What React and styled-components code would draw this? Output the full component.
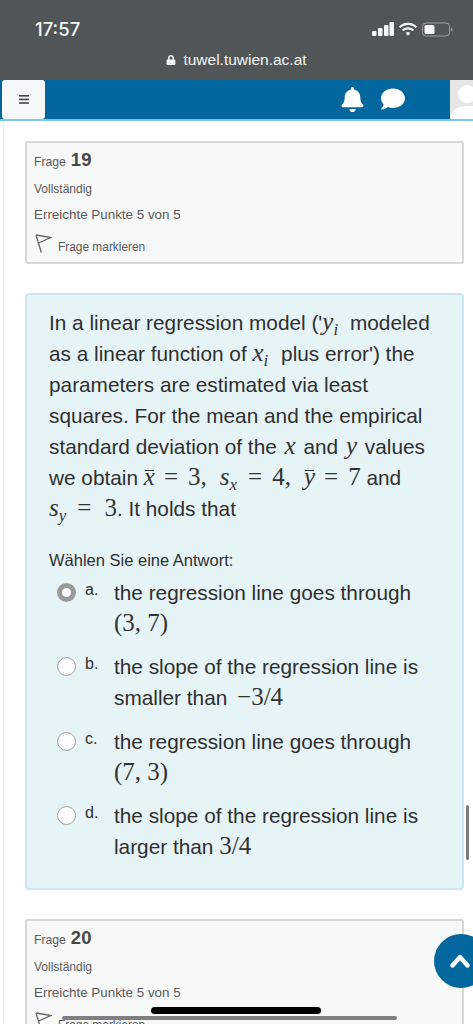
import styled, { createGlobalStyle } from 'styled-components';
import { FaBell, FaComment, FaLock, FaWifi } from 'react-icons/fa';

const GlobalStyle = createGlobalStyle`
  html, body { margin: 0; padding: 0; background: #fff; }
  body { font-family: "Liberation Sans", Arial, sans-serif; }
`;

const Page = styled.div`
  position: relative;
  width: 473px;
  height: 1024px;
  overflow: hidden;
  background: #fff;
`;

// Browser chrome
const Chrome = styled.div`
  height: 80px;
  background: #505557;
  color: #f4f5f5;
  display: flex;
  flex-direction: column;
`;

const StatusRow = styled.div`
  height: 50px;
  padding: 8px 20px 0 35px;
  box-sizing: border-box;
  display: flex;
  align-items: center;
  justify-content: space-between;
`;

const Clock = styled.span`
  font-size: 18.5px;
  font-weight: 500;
  font-family: Inter, "Liberation Sans", sans-serif;
`;

const StatusIcons = styled.div`
  display: flex;
  align-items: center;
  gap: 5px;
`;

const UrlRow = styled.div`
  display: flex;
  justify-content: center;
  align-items: center;
  gap: 7px;
  font-size: 15.5px;
  margin-top: 1px;
`;

// Site navbar
const Navbar = styled.div`
  height: 41px;
  box-sizing: border-box;
  background: #03679f;
  border-bottom: 2px solid #7cc8ea;
  display: flex;
  align-items: flex-start;
`;

const MenuButton = styled.div`
  width: 43px;
  height: 39px;
  margin-left: 2px;
  background: #f7f8f9;
  border-radius: 3px;
  display: flex;
  align-items: center;
  justify-content: center;
`;

const NavIcons = styled.div`
  flex: 1;
  height: 39px;
  padding: 7px 0 0 295px;
  box-sizing: border-box;
  display: flex;
  align-items: flex-start;
  gap: 16px;
  color: #fff;
`;

const Avatar = styled.svg`
  width: 23px;
  height: 39px;
  background: #e6e6e6;
  display: block;
`;

// Main column
const Content = styled.div`
  margin-left: 3px;
  border-left: 1px solid #eee;
  padding: 20px 9px 0 21px;
  display: flex;
  flex-direction: column;
  gap: 29px;
`;

const InfoCard = styled.div`
  background: #f7f8f8;
  border: 2px solid #d6d8d8;
  border-radius: 3px;
  padding: 6px 7px 0;
  height: 123px;
  box-sizing: border-box;
  color: #5a5a5a;
`;

const QuestionHead = styled.div`
  display: flex;
  align-items: baseline;
  gap: 5px;
  height: 23px;
  font-size: 12.2px;
`;

const QuestionNumber = styled.b`
  font-size: 18.5px;
  color: #484848;
`;

const InfoLine = styled.div`
  margin-top: 8px;
  height: 18px;
  line-height: 18px;
  font-size: ${({ $size }) => $size}px;
`;

const FlagRow = styled.div`
  display: flex;
  align-items: flex-start;
  gap: 6px;
  margin-top: 8px;
  margin-left: 1px;
  line-height: 30px;
  font-size: 11.9px;

  svg { margin-top: 2px; }
`;

const QuestionCard = styled.div`
  height: 597px;
  box-sizing: border-box;
  background: #e6f4f8;
  border: 2px solid #c9e8f1;
  border-radius: 4px;
  padding: 12px 12px 0 22px;
  color: #2f2f2f;
  font-size: 20.8px;
  line-height: 31px;
`;

const Prompt = styled.div`
  white-space: nowrap;
  height: 31px;
`;

const Math = styled.span`
  font-family: "Liberation Serif", "Times New Roman", serif;
  font-size: 25px;
  line-height: 0;
  font-style: ${({ $upright }) => ($upright ? 'normal' : 'italic')};
  color: #333;
`;

const Sub = styled.sub`
  font-size: 17px;
  line-height: 0;
  vertical-align: -5px;
  margin-right: ${({ $after }) => $after || 0}px;
`;

const Bar = styled.span`
  position: relative;
  &::before {
    content: '';
    position: absolute;
    left: 1px;
    right: 1px;
    top: 7px;
    height: 1px;
    background: #333;
  }
`;

// a lone variable inside the text, with some air round it
const Variable = styled(Math)`
  margin: 0 ${({ $air }) => $air}px;
`;

// relation sign with MathJax style spacing
const Rel = styled.span`
  margin: 0 10px 0 9px;
`;

const Gap = styled.span`
  display: inline-block;
  width: ${({ $w }) => $w}px;
`;

const AnswerPrompt = styled.div`
  font-size: 16.5px;
  line-height: 20px;
  margin-top: 26px;
`;

const Answers = styled.div`
  margin-top: 7px;
  margin-left: 8px;
  display: flex;
  flex-direction: column;
`;

const Answer = styled.div`
  display: flex;
  height: ${({ $h }) => $h}px;
`;

const Radio = styled.span`
  width: 19px;
  height: 19px;
  box-sizing: border-box;
  border-radius: 50%;
  margin-top: 6px;
  flex: none;
  background: ${({ $checked }) => ($checked ? '#fff' : '#fdfdfd')};
  border: ${({ $checked }) => ($checked ? '5px solid #9a9a9a' : '1.5px solid #a2a2a2')};
`;

const Letter = styled.span`
  width: 29px;
  margin-left: 9px;
  flex: none;
  font-size: 16px;
  line-height: 26px;
`;

const AnswerText = styled.div`
  white-space: nowrap;
`;

const ToTop = styled.div`
  position: absolute;
  left: 434px;
  top: 934px;
  width: 54px;
  height: 54px;
  border-radius: 50%;
  background: #03679f;
  display: flex;
  align-items: center;
  padding-left: 16px;
  box-sizing: border-box;
`;

const Scrollbar = styled.div`
  position: absolute;
  left: 466px;
  top: 805px;
  width: 3px;
  height: 55px;
  border-radius: 2px;
  background: #7a7a7a;
`;

const HomeBar = styled.div`
  position: absolute;
  left: 151px;
  top: 1007px;
  width: 170px;
  height: 7px;
  border-radius: 4px;
  background: #000;
`;

const ZoomBar = styled.div`
  position: absolute;
  left: 62px;
  top: 1016px;
  width: 335px;
  height: 4px;
  border-radius: 2px;
  background: #808080;
`;

const Signal = () => (
  <svg width="22" height="14" viewBox="0 0 22 14" fill="currentColor">
    <rect x="0" y="9" width="4.5" height="5" rx="1" />
    <rect x="6" y="6" width="4.5" height="8" rx="1" />
    <rect x="12" y="3" width="4.5" height="11" rx="1" />
    <rect x="17.5" y="0" width="4.5" height="14" rx="1" />
  </svg>
);

const Battery = () => (
  <svg width="31" height="15" viewBox="0 0 31 15" fill="none">
    <rect x="0.5" y="1" width="27" height="13" rx="3.5" stroke="#9a9d9e" />
    <rect x="2.5" y="3" width="10" height="9" rx="1.5" fill="#f7f7f7" />
    <path d="M29 5.5c1 .3 1.5 1 1.5 2s-.5 1.7-1.5 2z" fill="#9a9d9e" />
  </svg>
);

const Flag = () => (
  <svg width="17" height="19" viewBox="0 0 17 19" fill="none" stroke="#666" strokeWidth="1.3">
    <path d="M1 1 L6.3 18.5" />
    <path d="M1 1 L16 3.5 L3.5 9" />
  </svg>
);

const Burger = () => (
  <svg width="10" height="9" viewBox="0 0 10 9" fill="#444">
    <rect width="10" height="1.6" />
    <rect y="3.6" width="10" height="1.6" />
    <rect y="7.2" width="10" height="1.6" />
  </svg>
);

const Chevron = () => (
  <svg width="20" height="14" viewBox="0 0 20 14" fill="none" stroke="#fff" strokeWidth="4.4" strokeLinecap="round" strokeLinejoin="round">
    <path d="M2.5 11.5 L10 3 L17.5 11.5" />
  </svg>
);

const Info = ({ number }) => (
  <InfoCard>
    <QuestionHead>Frage <QuestionNumber>{number}</QuestionNumber></QuestionHead>
    <InfoLine $size={12}>Vollständig</InfoLine>
    <InfoLine $size={13.4}>Erreichte Punkte 5 von 5</InfoLine>
    <FlagRow><Flag />Frage markieren</FlagRow>
  </InfoCard>
);

const answers = [
  { letter: 'a.', h: 74, checked: true, lines: ['the regression line goes through', <Math $upright>(3, 7)</Math>] },
  { letter: 'b.', h: 75, lines: ['the slope of the regression line is', <>smaller than <Gap $w={4} /><Math $upright>−3/4</Math></>] },
  { letter: 'c.', h: 74, lines: ['the regression line goes through', <Math $upright>(7, 3)</Math>] },
  { letter: 'd.', h: 72, lines: ['the slope of the regression line is', <>larger than <Math $upright>3/4</Math></>] },
];

const App = () => (
  <Page>
    <GlobalStyle />
    <Chrome>
      <StatusRow>
        <Clock>17:57</Clock>
        <StatusIcons>
          <Signal />
          <FaWifi size={18} />
          <Battery />
        </StatusIcons>
      </StatusRow>
      <UrlRow><FaLock size={10} />tuwel.tuwien.ac.at</UrlRow>
    </Chrome>
    <Navbar>
      <MenuButton><Burger /></MenuButton>
      <NavIcons>
        <FaBell size={25} />
        <FaComment size={24} />
      </NavIcons>
      <Avatar viewBox="0 0 23 39">
        <circle cx="17" cy="14" r="9" fill="#fff" />
        <path d="M0 39c1-9 7-13 17-13s6 0 6 0v13z" fill="#fff" />
      </Avatar>
    </Navbar>
    <Content>
      <Info number="19" />
      <QuestionCard>
        <Prompt>In a linear regression model ('<Math>y<Sub $after={6}>i</Sub></Math> modeled</Prompt>
        <Prompt>as a linear function of <Math>x<Sub $after={7}>i</Sub></Math> plus error') the</Prompt>
        <Prompt>parameters are estimated via least</Prompt>
        <Prompt>squares. For the mean and the empirical</Prompt>
        <Prompt>standard deviation of the <Variable $air={2}>x</Variable> and <Variable $air={2}>y</Variable> values</Prompt>
        <Prompt>
          we obtain <Math><Bar>x</Bar></Math>
          <Math $upright><Rel>=</Rel>3,</Math><Gap $w={13} />
          <Math>s<Sub $after={2}>x</Sub></Math>
          <Math $upright><Rel>=</Rel>4,</Math><Gap $w={13} />
          <Math><Bar>y</Bar></Math>
          <Math $upright><Rel>=</Rel>7</Math> and
        </Prompt>
        <Prompt>
          <Math>s<Sub $after={2}>y</Sub></Math>
          <Math $upright><Rel>=</Rel><Gap $w={3} />3</Math>. It holds that
        </Prompt>
        <AnswerPrompt>Wählen Sie eine Antwort:</AnswerPrompt>
        <Answers>
          {answers.map((a) => (
            <Answer key={a.letter} $h={a.h}>
              <Radio $checked={a.checked} />
              <Letter>{a.letter}</Letter>
              <AnswerText>
                <div>{a.lines[0]}</div>
                <div>{a.lines[1]}</div>
              </AnswerText>
            </Answer>
          ))}
        </Answers>
      </QuestionCard>
      <Info number="20" />
    </Content>
    <Scrollbar />
    <ToTop><Chevron /></ToTop>
    <ZoomBar />
    <HomeBar />
  </Page>
);

export default App;
